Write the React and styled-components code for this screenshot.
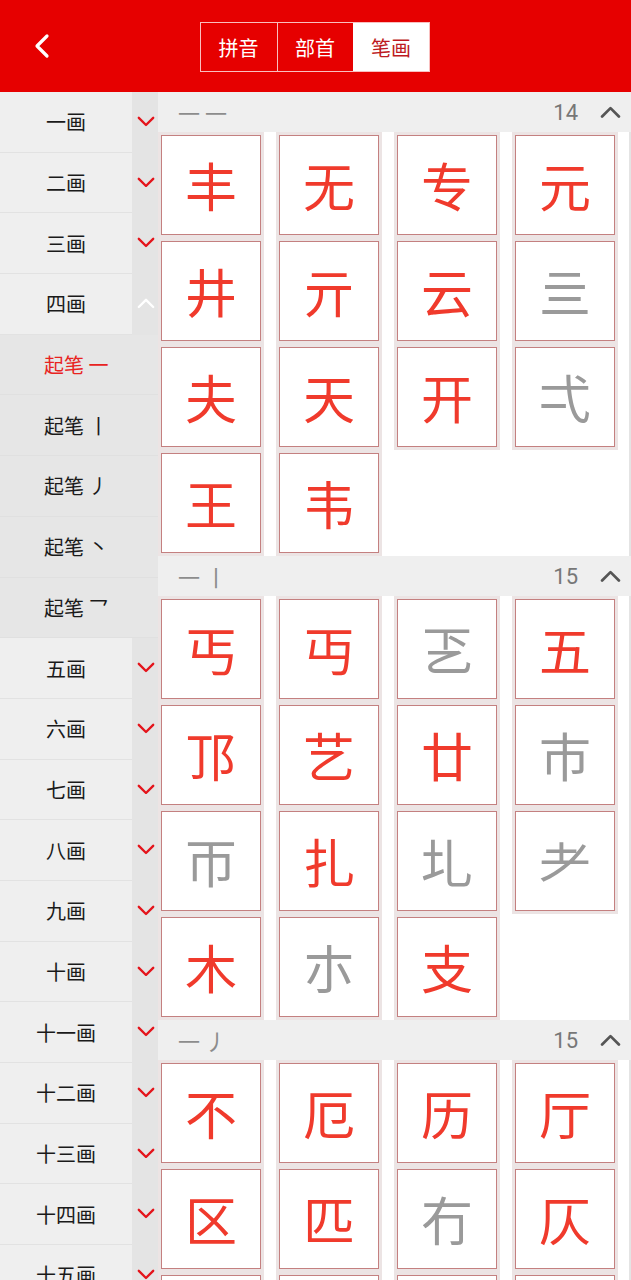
import React from 'react';
import styled, { createGlobalStyle } from 'styled-components';

const GlobalStyle = createGlobalStyle`
	html, body {
		margin: 0;
		padding: 0;
		background: #fff;
	}
	body {
		font-family: 'Noto Sans CJK SC', 'Noto Sans', sans-serif;
		overflow: hidden;
	}
	* {
		box-sizing: border-box;
	}
`;

const RED = '#e60000';
const CHAR_RED = '#f03a2c';
const CHAR_GRAY = '#9a9a9a';

const strokes = [
	{ label: '一画' },
	{ label: '二画' },
	{ label: '三画' },
	{
		label: '四画',
		open: true,
		subs: ['起笔 一', '起笔 丨', '起笔 丿', '起笔 丶', '起笔 乛'],
	},
	{ label: '五画' },
	{ label: '六画' },
	{ label: '七画' },
	{ label: '八画' },
	{ label: '九画' },
	{ label: '十画' },
	{ label: '十一画' },
	{ label: '十二画' },
	{ label: '十三画' },
	{ label: '十四画' },
	{ label: '十五画' },
];

// gray: 生僻字，灰色显示
const groups = [
	{
		title: '一 一',
		chars: '丰无专元井亓云亖夫天开弌王韦',
		gray: '亖弌',
	},
	{
		title: '一 丨',
		chars: '丐丏乤五邒艺廿巿帀扎圠耂木朩支',
		gray: '乤巿帀圠耂朩',
	},
	{
		title: '一 丿',
		chars: '不厄历厅区匹冇仄友尤厃犬歹牙屯',
		gray: '冇厃',
	},
];

function Chevron({ up, color, size = 18 }) {
	return (
		<svg width={size} height={size * 0.6} viewBox="0 0 20 12" fill="none">
			<polyline
				points={up ? '2,10 10,2 18,10' : '2,2 10,10 18,2'}
				stroke={color}
				strokeWidth="2.6"
				strokeLinecap="round"
				strokeLinejoin="round"
			/>
		</svg>
	);
}

export default function App() {
	return (
		<Page>
			<GlobalStyle />
			<TopBar>
				<BackButton>
					<svg width="18" height="26" viewBox="0 0 18 26" fill="none">
						<polyline points="14,3 4,13 14,23" stroke="#fff" strokeWidth="3.2" strokeLinecap="round" strokeLinejoin="round" />
					</svg>
				</BackButton>
				<Tabs>
					<Tab>拼音</Tab>
					<Tab>部首</Tab>
					<Tab active>笔画</Tab>
				</Tabs>
			</TopBar>

			<Body>
				<Sidebar>
					{strokes.map((s) => (
						<React.Fragment key={s.label}>
							<SideRow>
								<SideLabel>{s.label}</SideLabel>
								<SideToggle>
									{s.open ? <Chevron up color="#fff" /> : <Chevron color="#e4141b" />}
								</SideToggle>
							</SideRow>
							{s.subs &&
								s.subs.map((sub, i) => (
									<SubRow key={sub} active={i === 0}>
										{sub}
									</SubRow>
								))}
						</React.Fragment>
					))}
				</Sidebar>

				<Content>
					{groups.map((g) => (
						<section key={g.title}>
							<GroupHead>
								<GroupTitle>{g.title}</GroupTitle>
								<GroupCount>{[...g.chars].length}</GroupCount>
								<Chevron up color="#555" size={21} />
							</GroupHead>
							<CharGrid>
								{[...g.chars].map((c, i) => (
									<CharFrame key={i}>
										<CharCell muted={g.gray.includes(c)}>{c}</CharCell>
									</CharFrame>
								))}
							</CharGrid>
						</section>
					))}
				</Content>
			</Body>
		</Page>
	);
}

const Page = styled.div`
	width: 100%;
	height: 100vh;
	display: flex;
	flex-direction: column;
	overflow: hidden;
`;

const TopBar = styled.header`
	position: relative;
	flex: 0 0 92px;
	background: ${RED};
	display: flex;
	align-items: center;
	justify-content: center;
	padding-right: 2px;
`;

const BackButton = styled.div`
	position: absolute;
	left: 33px;
	top: 33px;
	display: flex;
`;

const Tabs = styled.div`
	display: flex;
	height: 50px;
	border: 1px solid rgba(255, 255, 255, 0.75);
	margin-top: 2px;
`;

const Tab = styled.div`
	width: 76px;
	display: flex;
	align-items: center;
	justify-content: center;
	font-size: 20px;
	color: ${(p) => (p.active ? '#bd1a22' : '#fff')};
	background: ${(p) => (p.active ? '#fff' : 'transparent')};
	& + & {
		border-left: 1px solid rgba(255, 255, 255, 0.75);
	}
`;

const Body = styled.div`
	flex: 1;
	display: flex;
	min-height: 0;
`;

const Sidebar = styled.nav`
	flex: 0 0 158px;
	overflow-y: auto;
	scrollbar-width: none;
	background: #efefef;
`;

const SideRow = styled.div`
	display: flex;
	height: 60.7px;
`;

const SideLabel = styled.div`
	flex: 0 0 132px;
	display: flex;
	align-items: center;
	justify-content: center;
	font-size: 20px;
	color: #1a1a1a;
	background: #efefef;
	border-bottom: 1px solid #e2e2e2;
`;

const SideToggle = styled.div`
	flex: 1;
	display: flex;
	align-items: center;
	justify-content: center;
	background: #e4e4e4;
	padding-bottom: 2px;
	padding-left: 1px;
`;

const SubRow = styled.div`
	height: 60.7px;
	display: flex;
	align-items: center;
	padding-left: 44px;
	font-size: 20px;
	color: ${(p) => (p.active ? '#e8231f' : '#1a1a1a')};
	background: #e6e6e6;
	border-bottom: 1px solid #e0e0e0;
`;

const Content = styled.main`
	flex: 1;
	overflow-y: auto;
	scrollbar-width: none;
	box-shadow: inset -2px 0 0 #e4e4e4;
`;

const GroupHead = styled.div`
	height: 40px;
	display: flex;
	align-items: center;
	padding: 0 10px 0 20px;
	background: #efefef;
`;

const GroupTitle = styled.div`
	flex: 1;
	font-size: 22px;
	color: #8c8c8c;
	white-space: pre;
`;

const GroupCount = styled.div`
	font-family: Roboto, 'Noto Sans', sans-serif;
	font-size: 22px;
	color: #777;
	margin-right: 22px;
`;

const CharGrid = styled.div`
	display: grid;
	grid-template-columns: repeat(4, 106px);
	column-gap: 12px;
	align-content: start;
`;

const CharFrame = styled.div`
	padding: 3px;
	background: #ece4e4;
`;

const CharCell = styled.div`
	height: 100px;
	display: flex;
	align-items: center;
	justify-content: center;
	background: #fff;
	border: 1px solid #c48080;
	font-size: 52px;
	line-height: 1;
	color: ${(p) => (p.muted ? CHAR_GRAY : CHAR_RED)};
`;
